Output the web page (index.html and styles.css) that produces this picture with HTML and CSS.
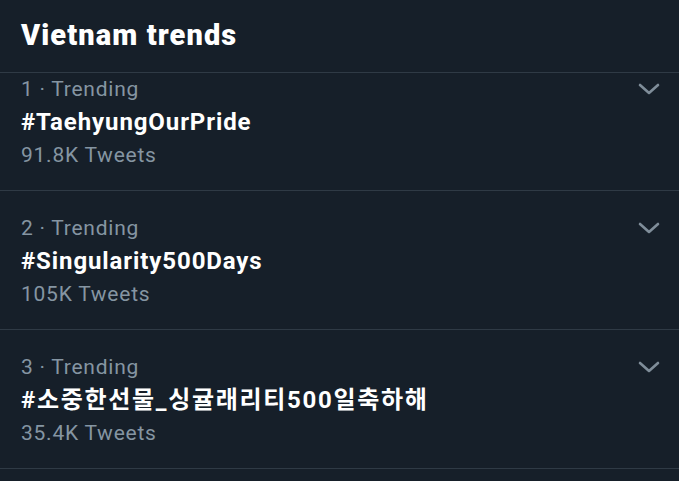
FILE: index.html
```html
<!DOCTYPE html>
<html lang="en">
<head>
<meta charset="utf-8">
<title>Vietnam trends</title>
<link rel="stylesheet" href="styles.css">
</head>
<body>
<div class="panel">
  <header class="panel-header">
    <h1 class="panel-title">Vietnam trends</h1>
  </header>
  <div class="trend-list">
    <div class="trend trend-first">
      <div class="trend-body">
        <div class="trend-meta">1 · Trending</div>
        <div class="trend-name">#TaehyungOurPride</div>
        <div class="trend-count">91.8K Tweets</div>
      </div>
      <svg class="chevron" width="22" height="12" viewBox="0 0 22 12"><polyline points="2,2 11,10 20,2" fill="none" stroke="currentColor" stroke-width="2.6" stroke-linecap="round" stroke-linejoin="round"/></svg>
    </div>
    <div class="trend">
      <div class="trend-body">
        <div class="trend-meta">2 · Trending</div>
        <div class="trend-name">#Singularity500Days</div>
        <div class="trend-count">105K Tweets</div>
      </div>
      <svg class="chevron" width="22" height="12" viewBox="0 0 22 12"><polyline points="2,2 11,10 20,2" fill="none" stroke="currentColor" stroke-width="2.6" stroke-linecap="round" stroke-linejoin="round"/></svg>
    </div>
    <div class="trend">
      <div class="trend-body">
        <div class="trend-meta">3 · Trending</div>
        <div class="trend-name trend-name-ko" lang="ko">#소중한선물_싱귤래리티500일축하해</div>
        <div class="trend-count">35.4K Tweets</div>
      </div>
      <svg class="chevron" width="22" height="12" viewBox="0 0 22 12"><polyline points="2,2 11,10 20,2" fill="none" stroke="currentColor" stroke-width="2.6" stroke-linecap="round" stroke-linejoin="round"/></svg>
    </div>
  </div>
</div>
</body>
</html>
```

FILE: styles.css
```css
html, body {
  margin: 0;
  padding: 0;
  background: #161f29;
}
body {
  font-family: Roboto, "Noto Sans CJK KR", sans-serif;
  color: #ffffff;
  width: 679px;
  height: 481px;
  overflow: hidden;
}
.panel {
  display: flex;
  flex-direction: column;
}
.panel-header {
  padding: 18px 21px 0;
  height: 54px;
  border-bottom: 1px solid #2f3a45;
}
.panel-title {
  margin: 0;
  font-size: 29px;
  line-height: 1.172;
  font-weight: 900;
  letter-spacing: 1.1px;
  color: #ffffff;
}
.trend-list {
  overflow: hidden;
}
.trend {
  display: flex;
  justify-content: space-between;
  align-items: flex-start;
  padding: 21px 19px 18px 21px;
  border-bottom: 1px solid #2f3a45;
}
.trend-first {
  margin-top: -21px;
}
.trend-body {
  display: flex;
  flex-direction: column;
}
.trend-meta,
.trend-count {
  font-size: 21px;
  line-height: 33px;
  letter-spacing: 0.75px;
  color: #8595a2;
}
.trend-name {
  font-size: 24px;
  line-height: 33px;
  font-weight: 700;
  letter-spacing: 0.9px;
  color: #ffffff;
}
.trend-name-ko {
  letter-spacing: 1.7px;
}
.chevron {
  margin-top: 10px;
  color: #7f8d99;
  flex: none;
}
```
